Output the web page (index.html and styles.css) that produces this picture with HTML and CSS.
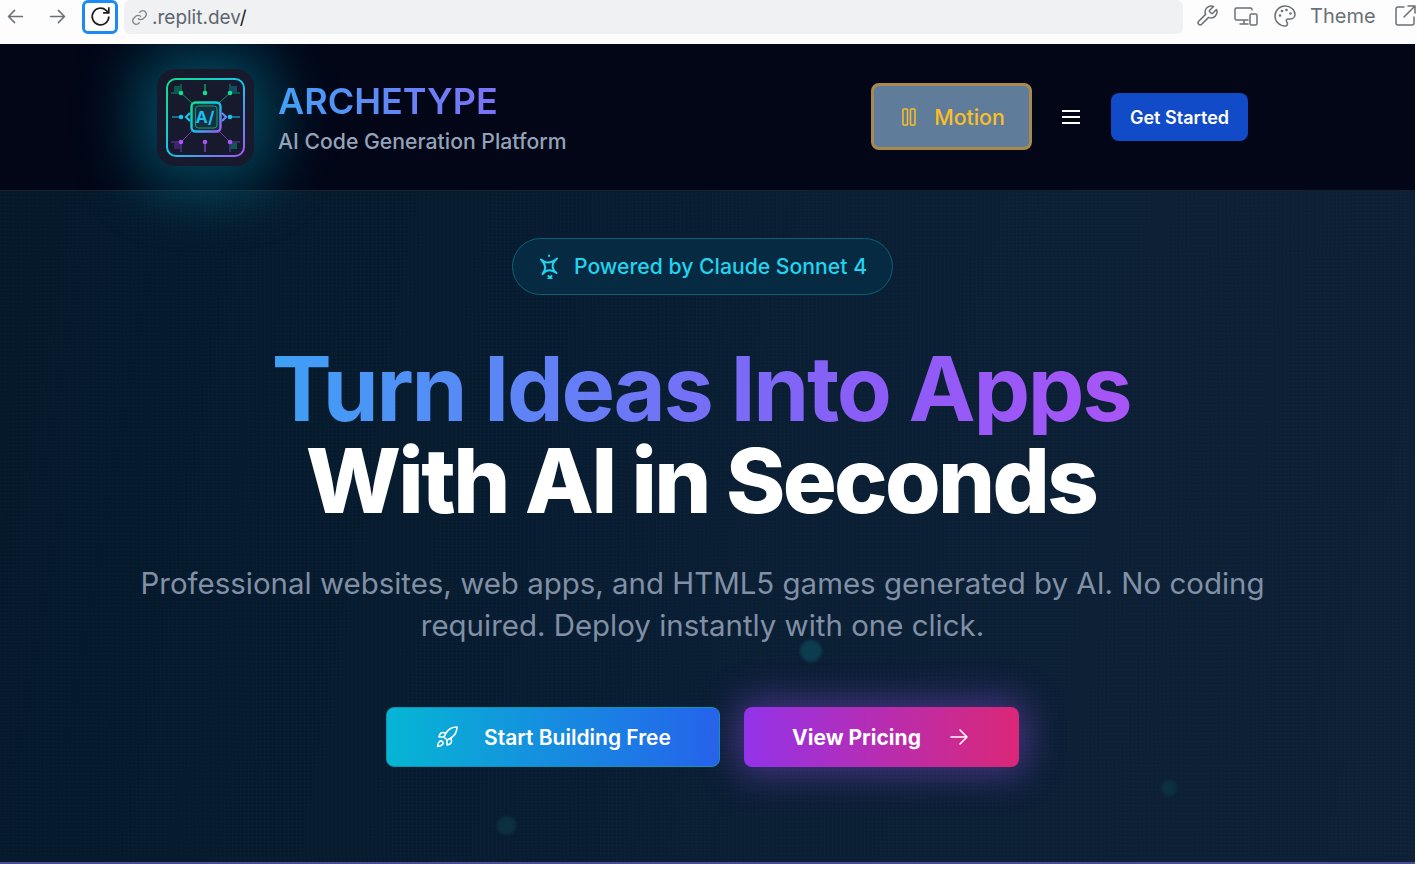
FILE: index.html
```html
<!DOCTYPE html>
<html lang="en">
<head>
  <meta charset="UTF-8" />
  <title>Archetype</title>
  <link rel="stylesheet" href="styles.css">
</head>
<body>
  <!-- browser toolbar of the webview -->
  <div class="toolbar">
    <div class="nav-icons">
      <svg class="tool" viewBox="0 0 24 24"><path d="M20 12H4M11 5l-7 7 7 7"/></svg>
      <svg class="tool" viewBox="0 0 24 24"><path d="M4 12h16M13 5l7 7-7 7"/></svg>
      <div class="reload">
        <svg viewBox="0 0 24 24"><path d="M20 12a8 8 0 1 1-2.6-5.900L20 8.500M20 3v5.500h-5.500"/></svg>
      </div>
    </div>
    <div class="address">
      <svg viewBox="0 0 24 24"><path d="M10 13a5 5 0 0 0 7.500.5l3-3a5 5 0 0 0-7-7l-1.700 1.700"/><path d="M14 11a5 5 0 0 0-7.500-.5l-3 3a5 5 0 0 0 7 7l1.700-1.700"/></svg>
      <span>.replit.dev<b>/</b></span>
    </div>
    <div class="tool-right">
      <svg class="tool" viewBox="0 0 24 24"><path d="M14.700 6.300a1 1 0 0 0 0 1.400l1.600 1.600a1 1 0 0 0 1.400 0l3.800-3.800a6 6 0 0 1-7.900 7.900l-6.900 6.900a2.100 2.100 0 0 1-3-3l6.900-6.900a6 6 0 0 1 7.900-7.900z"/></svg>
      <svg class="tool" viewBox="0 0 24 24"><path d="M18 6V5.500A1.500 1.500 0 0 0 16.500 4H2.500A1.500 1.500 0 0 0 1 5.500v9A1.500 1.500 0 0 0 2.500 16H14M6 20h8M10 16v4"/><rect x="16" y="10" width="7" height="11" rx="1.500"/></svg>
      <svg class="tool" viewBox="0 0 24 24"><path d="M12 2a10 10 0 0 0 0 20c1.500 0 2.500-1 2.500-2.300 0-.6-.3-1.100-.6-1.500-.4-.4-.6-.9-.6-1.400 0-1.100.9-1.900 2-1.900h2.300A4.500 4.500 0 0 0 22 10.500C22 5.800 17.500 2 12 2z"/><circle cx="7" cy="11.500" r=".6"/><circle cx="9" cy="7" r=".6"/><circle cx="13.500" cy="6" r=".6"/><circle cx="17.500" cy="9.500" r=".6"/></svg>
      <span class="theme">Theme</span>
      <svg class="tool" viewBox="0 0 24 24"><path d="M11 3H5a2 2 0 0 0-2 2v14a2 2 0 0 0 2 2h14a2 2 0 0 0 2-2v-6M22 2L11 13M15 2h7v7"/></svg>
    </div>
  </div>

  <div class="app">
    <header class="site-header">
      <div class="brand">
        <div class="logo">
          <svg viewBox="0 0 97 97">
            <defs>
              <linearGradient id="frame" x1="0" y1="0" x2="1" y2="1">
                <stop offset="0" stop-color="#10e08a"/>
                <stop offset=".5" stop-color="#16c5ea"/>
                <stop offset="1" stop-color="#a855f7"/>
              </linearGradient>
            </defs>
            <rect x="10" y="10" width="77" height="77" rx="9" fill="none" stroke="url(#frame)" stroke-width="2"/>
            <rect x="17" y="17" width="6" height="6" fill="#0f5a50"/>
            <rect x="74" y="17" width="6" height="6" fill="#154a68"/>
            <rect x="17" y="74" width="6" height="6" fill="#3d2466"/>
            <rect x="74" y="74" width="6" height="6" fill="#0f5a50"/>
            <g stroke-width="1" fill="none">
              <path stroke="#0f8f70" d="M24 15v9M14 24h10M73 15v9M73 24h10M24 24l11 10M73 24l-11 10"/>
              <path stroke="#10e08a" d="M48 15v9"/>
              <path stroke="#16c5ea" d="M15 48h9M73 48h10"/>
              <path stroke="#6d3ab8" d="M24 73v10M14 73h10M73 73v10M73 73h10M24 73l11-11M73 73l-11-11"/>
              <path stroke="#a855f7" d="M48 73v10"/>
            </g>
            <circle cx="24" cy="24" r="2.300" fill="#10e08a"/>
            <circle cx="48" cy="24" r="2.300" fill="#10e08a"/>
            <circle cx="73" cy="24" r="2.300" fill="#10e08a"/>
            <circle cx="24" cy="48" r="2.300" fill="#16c5ea"/>
            <circle cx="73" cy="48" r="2.300" fill="#16c5ea"/>
            <circle cx="24" cy="73" r="2.300" fill="#a855f7"/>
            <circle cx="48" cy="73" r="2.300" fill="#a855f7"/>
            <circle cx="73" cy="73" r="2.300" fill="#a855f7"/>
            <rect x="34.500" y="33.500" width="29" height="29" rx="4" fill="#16303f" stroke="url(#frame)" stroke-width="2.400"/>
            <rect x="38.500" y="37" width="21.500" height="22" rx="3" fill="none" stroke="#10a070" stroke-width="1"/>
            <path d="M33 44l-4 4 4 4" fill="none" stroke="#16c5ea" stroke-width="2.200"/>
            <path d="M65 44l4 4-4 4" fill="none" stroke="#5b8cf6" stroke-width="2.200"/>
            <text x="48" y="54" class="logo-text">A/</text>
          </svg>
        </div>
        <div class="brand-text">
          <h1>ARCHETYPE</h1>
          <p>AI Code Generation Platform</p>
        </div>
      </div>
      <div class="header-actions">
        <button class="motion">
          <svg viewBox="0 0 14 18"><rect x="1" y="1" width="4.500" height="16" rx=".8"/><rect x="8.500" y="1" width="4.500" height="16" rx=".8"/></svg>
          Motion
        </button>
        <svg class="menu" viewBox="0 0 18 14"><path d="M0 1h18M0 7h18M0 13h18"/></svg>
        <button class="get-started">Get Started</button>
      </div>
    </header>

    <section class="hero">
      <div class="dot dot-a"></div>
      <div class="dot dot-b"></div>
      <div class="dot dot-c"></div>
      <div class="pill">
        <svg viewBox="0 0 24 26"><path d="M3 6.500Q10 13 19 5.500Q10.500 13 18.500 20Q10.500 14 4.500 21Q10.500 13.500 3 6.500z"/><path d="M11 2.500v.5M10.500 23l3 2.500M13.500 23l-3 2.500"/></svg>
        Powered by Claude Sonnet 4
      </div>
      <h2 class="headline">
        <span class="grad">Turn Ideas Into Apps</span>
        <span class="white">With AI in Seconds</span>
      </h2>
      <p class="lead">Professional websites, web apps, and HTML5 games generated by AI. No coding required. Deploy instantly with one click.</p>
      <div class="cta">
        <button class="btn btn-start">
          <svg viewBox="0 0 24 24"><path d="M4.500 16.500c-1.500 1.300-2 5-2 5s3.700-.5 5-2c.7-.8.700-2.100-.1-2.900a2.200 2.200 0 0 0-2.900-.1z"/><path d="M12 15l-3-3a22 22 0 0 1 2-4A12.900 12.900 0 0 1 22 2c0 2.700-.8 7.500-6 11a22 22 0 0 1-4 2z"/><path d="M9 12H4s.600-3 2-4c1.600-1.100 5 0 5 0M12 15v5s3-.6 4-2c1.100-1.600 0-5 0-5"/></svg>
          Start Building Free
        </button>
        <button class="btn btn-pricing">
          View Pricing
          <svg viewBox="0 0 24 24"><path d="M4 12h16M13 5l7 7-7 7"/></svg>
        </button>
      </div>
    </section>
  </div>
</body>
</html>
```

FILE: styles.css
```css
* {
  box-sizing: border-box;
}

html, body {
  margin: 0;
  height: 100%;
  overflow: hidden;
  background: #fff;
  font-family: Inter, "Liberation Sans", sans-serif;
}

/* toolbar */
.toolbar {
  height: 44px;
  display: flex;
  align-items: flex-start;
  background: #fdfdfe;
}

.nav-icons {
  display: flex;
  align-items: center;
  width: 124px;
  height: 33px;
  padding-left: 5px;
  gap: 21px;
}

.tool {
  width: 24px;
  height: 24px;
  fill: none;
  stroke: #6b7075;
  stroke-width: 1.5;
  stroke-linecap: round;
  stroke-linejoin: round;
  flex: none;
}

.nav-icons .tool {
  width: 21px;
  height: 21px;
  stroke-width: 1.7;
}

.reload {
  width: 36px;
  height: 34px;
  margin-left: -7px;
  border: 3px solid #1d8bf5;
  border-radius: 6px;
  display: flex;
  align-items: center;
  justify-content: center;
  background: #fff;
}

.reload svg {
  width: 25px;
  height: 25px;
  fill: none;
  stroke: #1c1c1e;
  stroke-width: 1.6;
}

.address {
  width: 1059px;
  height: 34px;
  background: #f0f1f3;
  border-radius: 6px;
  display: flex;
  align-items: center;
  padding-left: 7px;
  gap: 4px;
  font-size: 19px;
  color: #5d6670;
}

.address svg {
  width: 17px;
  height: 17px;
  fill: none;
  stroke: #84888d;
  stroke-width: 2;
}

.address b {
  font-weight: 400;
  color: #1c1c1e;
}

.tool-right {
  flex: 1;
  height: 32px;
  display: flex;
  align-items: center;
  padding-left: 12px;
  gap: 15px;
  white-space: nowrap;
}

.theme {
  font-size: 20px;
  color: #6b7075;
  margin: 0 2px 0 -2px;
}

/* app */
.app {
  width: 1415px;
  height: 820px;
  background: #0b1c33;
  border-bottom: 2px solid #4a4a9c;
  overflow: hidden;
}

.site-header {
  position: relative;
  z-index: 1;
  height: 147px;
  padding: 0 167px 0 157px;
  display: flex;
  align-items: center;
  justify-content: space-between;
  background: #020617;
  border-bottom: 1px solid #17202f;
}

.brand {
  display: flex;
  align-items: center;
  gap: 24px;
}

.logo {
  width: 97px;
  height: 97px;
  border-radius: 18px;
  background: #171a2c;
  box-shadow: 0 0 60px 22px rgba(6, 182, 212, .36);
}

.logo svg {
  display: block;
  width: 97px;
  height: 97px;
}

.logo-text {
  font: 700 16.5px Inter, sans-serif;
  fill: #19bff0;
  text-anchor: middle;
}

.brand-text h1 {
  margin: 0;
  font-size: 36px;
  line-height: 44px;
  font-weight: 600;
  background: linear-gradient(90deg, #43a0f6, #8f62f6);
  -webkit-background-clip: text;
  background-clip: text;
  color: transparent;
}

.brand-text p {
  margin: 4px 0 0;
  font-size: 21.2px;
  line-height: 28px;
  font-weight: 500;
  color: #94a3b8;
}

.header-actions {
  display: flex;
  align-items: center;
}

button {
  font-family: inherit;
  cursor: pointer;
}

.motion {
  width: 161px;
  height: 67px;
  margin-bottom: 2px;
  padding: 2px 0 0 4px;
  display: flex;
  align-items: center;
  justify-content: center;
  gap: 18px;
  background: #5f7d9b;
  border: 3px solid #a88a4f;
  border-radius: 8px;
  color: #fbbf24;
  font-size: 21.3px;
  font-weight: 500;
}

.motion svg {
  width: 14px;
  height: 18px;
  fill: none;
  stroke: #fbbf24;
  stroke-width: 1.5;
}

.menu {
  width: 18px;
  height: 14px;
  margin: 0 31px 0 30px;
  fill: none;
  stroke: #fff;
  stroke-width: 2;
}

.get-started {
  width: 137px;
  height: 48px;
  border: none;
  border-radius: 8px;
  background: #114bc8;
  color: #fff;
  font-size: 18px;
  font-weight: 600;
}

/* hero */
.hero {
  position: relative;
  height: 671px;
  padding: 47px 10px 0 0;
  display: flex;
  flex-direction: column;
  align-items: center;
  background:
    repeating-linear-gradient(0deg, rgba(255, 255, 255, .006) 0 1px, transparent 1px 4px),
    repeating-linear-gradient(90deg, rgba(255, 255, 255, .006) 0 1px, transparent 1px 4px),
    linear-gradient(100deg, #04182a 0%, #0a1e34 55%, #0d2036 100%);
  text-align: center;
}

.dot {
  position: absolute;
  border-radius: 50%;
  background: #0c3040;
  filter: blur(1.5px);
}

.dot-a {
  left: 800px;
  top: 449px;
  width: 22px;
  height: 22px;
  background: #0d3c4e;
}

.dot-b {
  left: 497px;
  top: 625px;
  width: 19px;
  height: 19px;
}

.dot-c {
  left: 1161px;
  top: 589px;
  width: 16px;
  height: 16px;
}

.pill {
  width: 381px;
  height: 57px;
  display: flex;
  align-items: center;
  justify-content: center;
  gap: 12px;
  border: 1px solid #0d5f78;
  border-radius: 29px;
  background: #062a42;
  color: #22d3ee;
  font-size: 21.2px;
  font-weight: 500;
  padding-bottom: 2px;
}

.pill svg {
  width: 24px;
  height: 26px;
  fill: none;
  stroke: #22d3ee;
  stroke-width: 2;
  stroke-linejoin: round;
  stroke-linecap: round;
}

.headline {
  margin: 48px 0 0 -3px;
  font-size: 90px;
  line-height: 92px;
  font-weight: 700;
  letter-spacing: -2.35px;
  color: #fff;
  white-space: nowrap;
}

.headline span {
  display: block;
}

.headline .white {
  font-weight: 800;
  letter-spacing: -2.65px;
}

.headline .grad {
  background: linear-gradient(90deg, #3ea0f5 0%, #8b5cf6 70%, #a855f7 100%);
  -webkit-background-clip: text;
  background-clip: text;
  color: transparent;
}

.lead {
  width: 1180px;
  margin: 35px 0 0;
  font-size: 29.45px;
  line-height: 42px;
  color: #8190a5;
}

.cta {
  display: flex;
  gap: 24px;
  margin: 61px 0 0;
}

.btn {
  height: 60px;
  border-radius: 8px;
  border: none;
  display: flex;
  align-items: center;
  justify-content: center;
  color: #fff;
  font-size: 21px;
  font-weight: 600;
}

.btn svg {
  width: 24px;
  height: 24px;
  fill: none;
  stroke: #fff;
  stroke-width: 1.6;
  stroke-linecap: round;
  stroke-linejoin: round;
}

.btn-start {
  width: 334px;
  gap: 25px;
  border: 1px solid #0f93b5;
  background: linear-gradient(90deg, #06b6d4, #2563eb);
}

.btn-pricing {
  width: 275px;
  gap: 26px;
  font-weight: 700;
  background: linear-gradient(90deg, #9333ea, #db2777);
  box-shadow: 0 0 36px 8px rgba(147, 80, 234, .42);
}
```
